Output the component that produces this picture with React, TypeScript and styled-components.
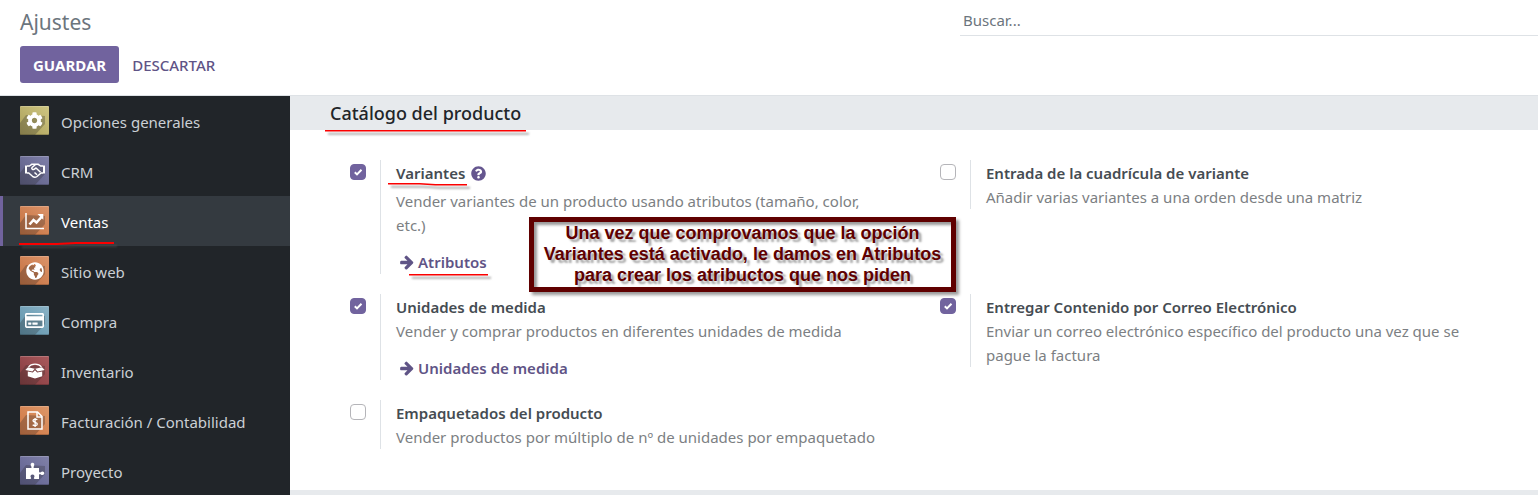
import React from "react";
import styled, { createGlobalStyle } from "styled-components";
import { FaCog, FaGlobeAmericas, FaQuestionCircle, FaRegCreditCard } from "react-icons/fa";

const GlobalStyle = createGlobalStyle`
  *, *::before, *::after { box-sizing: border-box; }
  body {
    margin: 0;
    background: #fff;
    color: #4c4c4c;
    font-family: "Noto Sans", "Open Sans", sans-serif;
    font-size: 15px;
    line-height: 24px;
  }
  #root { display: flex; flex-direction: column; height: 100vh; }
`;

const ControlPanel = styled.header`
  display: grid;
  grid-template-columns: 960fr 578fr;
  flex: none;
  border-bottom: 1px solid #dee2e6;
`;

const PanelMain = styled.div`
  padding: 8px 20px 12px;
`;

const PageTitle = styled.h1`
  margin: 0 0 8px;
  color: #6c757d;
  font-size: 21px;
  font-weight: 400;
  line-height: 28px;
  padding-bottom: 2px;
`;

const Buttons = styled.div`
  display: flex;
`;

const Button = styled.button<{ $primary?: boolean }>`
  height: 37px;
  padding: 0 13px;
  border: 0;
  border-radius: 3px;
  background: ${(p) => (p.$primary ? "#71639e" : "transparent")};
  color: ${(p) => (p.$primary ? "#fff" : "#5f5486")};
  font: inherit;
  font-weight: ${(p) => (p.$primary ? 700 : 500)};
`;

const SearchInput = styled.input`
  height: 32px;
  margin-top: 4px;
  padding: 0 3px;
  border: 0;
  border-bottom: 1px solid #dee2e6;
  background: transparent;
  color: #4c4c4c;
  font: inherit;
  outline: 0;
  &::placeholder { color: #6c757d; opacity: 1; }
`;

const Body = styled.div`
  display: flex;
  flex: 1;
  min-height: 0;
`;

const Sidebar = styled.nav`
  flex: 0 0 290px;
  overflow: hidden;
  background: #212529;
`;

const Tab = styled.a<{ $active?: boolean }>`
  position: relative;
  display: flex;
  align-items: center;
  gap: 12px;
  height: 50px;
  padding-left: 20px;
  background: ${(p) => (p.$active ? "#343a40" : "transparent")};
  box-shadow: ${(p) => (p.$active ? "inset 3px 0 0 #71639e" : "none")};
  color: ${(p) => (p.$active ? "#fff" : "#cbd0d5")};
  text-decoration: none;
`;

const TabName = styled.span`
  padding-top: 2px;
`;

const AppIcon = styled.span<{ $from: string; $to: string }>`
  position: relative;
  display: grid;
  place-items: center;
  width: 29px;
  height: 29px;
  margin-bottom: 1px;
  border-radius: 1px;
  overflow: hidden;
  background: linear-gradient(45deg, ${(p) => p.$from}, ${(p) => p.$to});
  box-shadow: inset 0 1px 0 rgba(255, 255, 255, 0.2), inset 0 -1px 0 rgba(0, 0, 0, 0.2);
  color: #fff;
`;

const LongShadow = styled.svg`
  position: absolute;
  inset: 0;
`;

const Glyph = styled.span`
  position: relative;
  display: flex;
  svg { display: block; }
`;

const Settings = styled.main`
  position: relative;
  flex: 1;
  min-width: 0;
  overflow: hidden;
`;

const SectionTitle = styled.h2`
  height: 34px;
  margin: 0;
  padding-left: 40px;
  background: #e7eaed;
  color: #212529;
  font-size: 18px;
  font-weight: 500;
  line-height: 34px;
`;

const SettingsGrid = styled.div`
  display: grid;
  grid-template-columns: 1fr 1fr;
  row-gap: 20px;
  padding: 30px 8px 41px 60px;
`;

const Setting = styled.div`
  display: flex;
  align-items: flex-start;
  gap: 14px;
`;

const CheckBox = styled.input`
  appearance: none;
  flex: none;
  width: 16px;
  height: 16px;
  margin: 4px 0 0;
  border: 1px solid #b5b5b9;
  border-radius: 4px;
  background: #fff;
  &:checked {
    border-color: #71639e;
    background: #71639e
      url("data:image/svg+xml,%3Csvg xmlns='http://www.w3.org/2000/svg' viewBox='0 0 14 14'%3E%3Cpath d='M3.8 7.2l2.2 2.2 4.5-4.6' fill='none' stroke='white' stroke-width='2'/%3E%3C/svg%3E")
      center / 14px 14px no-repeat;
  }
`;

const SettingBody = styled.div`
  flex: 1;
  padding: 1px 56px 0 15px;
  border-left: 1px solid #dee2e6;
`;

const TitleRow = styled.div<{ $spaced?: boolean }>`
  display: flex;
  align-items: center;
  gap: 6px;
  margin-bottom: ${(p) => (p.$spaced ? 4 : 0)}px;
`;

const SettingLabel = styled.label`
  position: relative;
  color: #454c52;
  font-weight: 600;
`;

const Help = styled.span`
  display: flex;
  color: #65568f;
`;

const Description = styled.p`
  margin: 0;
  color: #7c7f83;
`;

const SettingLink = styled.a`
  display: flex;
  align-items: center;
  gap: 4px;
  width: max-content;
  margin: 13px 0 0 4px;
  color: #5f5486;
  font-weight: 600;
  text-decoration: none;
`;

const Marked = styled.span`
  position: relative;
`;

const MarkLine = styled.svg<{ $left: number; $top: number }>`
  position: absolute;
  left: ${(p) => p.$left}px;
  top: ${(p) => p.$top}px;
  overflow: visible;
  pointer-events: none;
  filter: drop-shadow(3px 3px 1px rgba(80, 80, 80, 0.6));
`;

const Callout = styled.aside`
  position: absolute;
  left: 239px;
  top: 121px;
  width: 427px;
  height: 75px;
  padding-top: 1px;
  border: 5px solid #600000;
  background: #fff;
  box-shadow: 3px 3px 3px rgba(0, 0, 0, 0.4), inset 3px 3px 3px rgba(0, 0, 0, 0.4);
  color: #600000;
  font-family: "Liberation Sans", Arial, sans-serif;
  font-size: 18px;
  font-weight: 700;
  line-height: 21px;
  text-align: center;
  text-shadow: 3px 3px 2px rgba(0, 0, 0, 0.35);
  white-space: pre;
`;

const CalloutText = styled.p`
  display: flex;
  justify-content: center;
  margin: 0;
`;

const NextSection = styled.div`
  height: 34px;
  background: #e7eaed;
`;

function Mark({ left, top, width, slope = 0, weight = 1.5 }: {
  left: number;
  top: number;
  width: number;
  slope?: number;
  weight?: number;
}) {
  const start = weight / 2 + (slope < 0 ? -slope : 0);
  return (
    <MarkLine $left={left} $top={top} width={width} height={4} aria-hidden="true">
      <path
        d={`M0 ${start}H${width * 0.4}L${width * 0.6} ${start + slope}H${width}`}
        fill="none"
        stroke="#fb0000"
        strokeWidth={weight}
      />
    </MarkLine>
  );
}

const HandshakeGlyph = () => (
  <svg width="20" height="15" viewBox="0 0 20 15" fill="none" stroke="#fff" strokeLinejoin="round">
    <path d="M1 2.500v8M19 2.500v8" strokeWidth="2" />
    <path d="M2 3h2.500L7 1.200h6L15.500 3H18M2 10h1.800l3.700 3.300c1 .8 3.300 1 4.500.2l4-3.500h2" strokeWidth="1.500" />
    <path d="M10.500 1.500L7 4.500c-.8 1.500.8 2.500 2 1.800l2-1.300 4.500 4.300M9.500 9.500l2.500 2.300" strokeWidth="1.500" />
  </svg>
);

const SalesGlyph = () => (
  <svg width="20" height="18" viewBox="0 0 20 18" fill="none" stroke="#fff">
    <path d="M1 1v15.500H19" strokeWidth="1.500" />
    <path d="M4.500 12.500l4-4.500 3 2.500 5-5.500" strokeWidth="2.600" />
    <path d="M12.500 2H18.300v5.800z" fill="#fff" stroke="none" />
  </svg>
);

const BoxGlyph = () => (
  <svg width="20" height="16" viewBox="0 0 20 16" fill="#fff">
    <path d="M3.500 4C5 2 7.500 1.200 10 1.200S15 2 16.500 4" fill="none" stroke="#fff" strokeWidth="1.200" />
    <path d="M3 4.200L9.800 5.700 7.300 8.500.3 7zM17 4.200l-6.800 1.500 2.500 2.800 7-1.500z" />
    <path d="M2.800 8.500l5 1.100 2.200-2.400 2.200 2.400 5-1.100v4.700L10 15.500l-7.200-2.300z" />
  </svg>
);

const InvoiceGlyph = () => (
  <svg width="16" height="19" viewBox="0 0 16 19" fill="none" stroke="#fff" strokeWidth="1.5">
    <path d="M1 1h9.500l4.500 4.500V18H1z" />
    <path d="M10 1v5h5" />
    <path d="M10.300 8.800C9.500 8 6 7.800 6 9.800s4.300 1.200 4.300 3.200-3.500 1.900-4.600.8M8.100 7v9" strokeWidth="1.300" />
  </svg>
);

const PuzzleGlyph = () => (
  <svg width="20" height="18" viewBox="0 0 20 18" fill="#fff">
    <path d="M1 6h4.500c1.200 0 1.300-.8.800-1.600C5 2.500 6 .8 7.500.8S10 2.500 8.800 4.400C8.300 5.200 8.500 6 9.600 6H14v3.500c0 1 .9 1.300 1.700.7 1.700-1.300 3.600-.5 3.600 1.100s-1.900 2.400-3.600 1.100c-.8-.6-1.700-.3-1.700.8V17H9.800c-1 0-1.200-.8-.7-1.500 1-1.500 0-3-1.600-3s-2.600 1.500-1.600 3c.5.700.3 1.500-.7 1.500H1z" />
  </svg>
);

const ArrowGlyph = () => (
  <svg width="14" height="16" viewBox="0 0 1536 1792" fill="currentColor" aria-hidden="true">
    <path d="M1472 960q0 54-37 91l-651 651q-39 37-91 37-51 0-90-37l-75-75q-38-38-38-91t38-91l293-293H117q-52 0-84.500-37.500T0 1024V896q0-53 32.500-90.500T117 768h704L528 474q-38-36-38-90t38-90l75-75q38-38 90-38 53 0 91 38l651 651q37 35 37 90z" />
  </svg>
);

const apps = [
  { name: "Opciones generales", from: "#a99d57", to: "#cfc783", glyph: <FaCog size={17} /> },
  { name: "CRM", from: "#5c5d84", to: "#7f80a9", glyph: <HandshakeGlyph /> },
  { name: "Ventas", from: "#c4703f", to: "#dc946a", glyph: <SalesGlyph />, active: true },
  { name: "Sitio web", from: "#c4703f", to: "#dc946a", glyph: <FaGlobeAmericas size={18} /> },
  { name: "Compra", from: "#5e92aa", to: "#8bb3c6", glyph: <FaRegCreditCard size={19} /> },
  { name: "Inventario", from: "#843a3e", to: "#a9595c", glyph: <BoxGlyph /> },
  { name: "Facturación / Contabilidad", from: "#cf7542", to: "#dd9869", glyph: <InvoiceGlyph /> },
  { name: "Proyecto", from: "#5f6090", to: "#8081a8", glyph: <PuzzleGlyph /> },
];

const settings = [
  {
    id: "variantes",
    title: "Variantes",
    text: "Vender variantes de un producto usando atributos (tamaño, color, etc.)",
    link: "Atributos",
    checked: true,
    marked: true,
  },
  {
    id: "cuadricula",
    title: "Entrada de la cuadrícula de variante",
    text: "Añadir varias variantes a una orden desde una matriz",
  },
  {
    id: "unidades",
    title: "Unidades de medida",
    text: "Vender y comprar productos en diferentes unidades de medida",
    link: "Unidades de medida",
    checked: true,
  },
  {
    id: "correo",
    title: "Entregar Contenido por Correo Electrónico",
    text: "Enviar un correo electrónico específico del producto una vez que se pague la factura",
    checked: true,
  },
  {
    id: "empaquetados",
    title: "Empaquetados del producto",
    text: "Vender productos por múltiplo de nº de unidades por empaquetado",
  },
];

export default function App() {
  return (
    <>
      <GlobalStyle />
      <ControlPanel>
        <PanelMain>
          <PageTitle>Ajustes</PageTitle>
          <Buttons>
            <Button $primary>GUARDAR</Button>
            <Button>DESCARTAR</Button>
          </Buttons>
        </PanelMain>
        <SearchInput type="text" placeholder="Buscar..." aria-label="Buscar" />
      </ControlPanel>
      <Body>
        <Sidebar>
          {apps.map((app) => (
            <Tab key={app.name} href="#" $active={app.active}>
              <AppIcon $from={app.from} $to={app.to}>
                <LongShadow width="29" height="29" aria-hidden="true">
                  <path d="M6 9L0 17v12h15L25 18V10z" fill="rgba(40,40,40,.28)" />
                </LongShadow>
                <Glyph>{app.glyph}</Glyph>
              </AppIcon>
              <TabName>{app.name}</TabName>
              {app.active && <Mark left={19} top={46} width={95} slope={-1} weight={2} />}
            </Tab>
          ))}
        </Sidebar>
        <Settings>
          <SectionTitle>
            <Marked>
              Catálogo del producto
              <Mark left={-5} top={29} width={201} />
            </Marked>
          </SectionTitle>
          <SettingsGrid>
            {settings.map((s) => (
              <Setting key={s.id}>
                <CheckBox type="checkbox" id={s.id} defaultChecked={s.checked} />
                <SettingBody>
                  <TitleRow $spaced={s.marked}>
                    <SettingLabel htmlFor={s.id}>
                      {s.title}
                      {s.marked && <Mark left={-8} top={22} width={79} slope={1} />}
                    </SettingLabel>
                    {s.marked && (
                      <Help>
                        <FaQuestionCircle size={15} />
                      </Help>
                    )}
                  </TitleRow>
                  <Description>{s.text}</Description>
                  {s.link && (
                    <SettingLink href="#">
                      <ArrowGlyph />
                      <Marked>
                        {s.link}
                        {s.marked && <Mark left={-9} top={24} width={79} />}
                      </Marked>
                    </SettingLink>
                  )}
                </SettingBody>
              </Setting>
            ))}
          </SettingsGrid>
          <NextSection />
          <Callout>
            <CalloutText>
              {"Una vez que comprovamos que la opción\nVariantes está activado, le damos en Atributos\npara crear los atribuctos que nos piden"}
            </CalloutText>
          </Callout>
        </Settings>
      </Body>
    </>
  );
}
